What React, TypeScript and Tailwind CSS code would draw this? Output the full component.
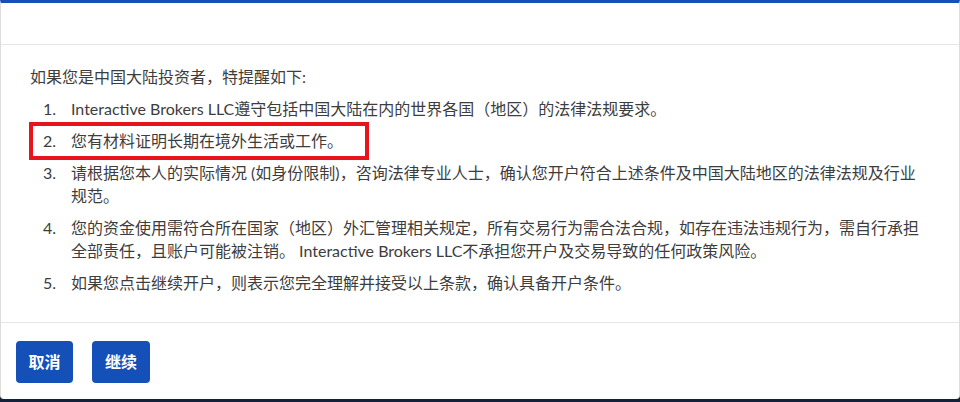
const items = [
  'Interactive Brokers LLC遵守包括中国大陆在内的世界各国（地区）的法律法规要求。',
  '您有材料证明长期在境外生活或工作。',
  '请根据您本人的实际情况 (如身份限制)，咨询法律专业人士，确认您开户符合上述条件及中国大陆地区的法律法规及行业规范。',
  '您的资金使用需符合所在国家（地区）外汇管理相关规定，所有交易行为需合法合规，如存在违法违规行为，需自行承担全部责任，且账户可能被注销。 Interactive Brokers LLC不承担您开户及交易导致的任何政策风险。',
  '如果您点击继续开户，则表示您完全理解并接受以上条款，确认具备开户条件。',
];

export default function App() {
  return (
    <div
      className="h-[402px] w-[960px] overflow-hidden bg-[#13213a]"
      style={{ fontFamily: 'Lato, "Noto Sans CJK SC", sans-serif' }}
    >
      <div className="flex h-[399px] flex-col rounded-b-[4px] border-x border-t-[3px] border-x-[#dcdcdc] border-t-[#1550b8] bg-white">
        {/* header */}
        <div className="h-[42px] shrink-0 border-b border-[#e6e6e6]" />

        {/* body */}
        <div className="flex-1 pl-[29px] pr-[34px] pt-[20px] text-[16px] leading-[23px] text-[#3d3d3d]">
          <p>如果您是中国大陆投资者，特提醒如下:</p>
          <ol className="mt-[9px] flex flex-col gap-[9px]">
            {items.map((text, i) => (
              <li key={i} className="relative flex">
                <span className="w-[26px] shrink-0 text-right">{i + 1}.</span>
                <span className="ml-[15px]">{text}</span>
                {i === 1 && (
                  <div className="pointer-events-none absolute -left-[1px] -top-[7px] h-[38px] w-[340px] border-4 border-[#e8141c]" />
                )}
              </li>
            ))}
          </ol>
        </div>

        {/* footer */}
        <div className="flex h-[77px] shrink-0 gap-[19px] border-t border-[#e6e6e6] pl-[15px] pt-[18px]">
          <button className="h-[42px] w-[57px] rounded-[4px] bg-[#1550b8] text-[16px] font-bold text-white">
            取消
          </button>
          <button className="h-[42px] w-[58px] rounded-[4px] bg-[#1550b8] text-[16px] font-bold text-white">
            继续
          </button>
        </div>
      </div>
    </div>
  );
}
